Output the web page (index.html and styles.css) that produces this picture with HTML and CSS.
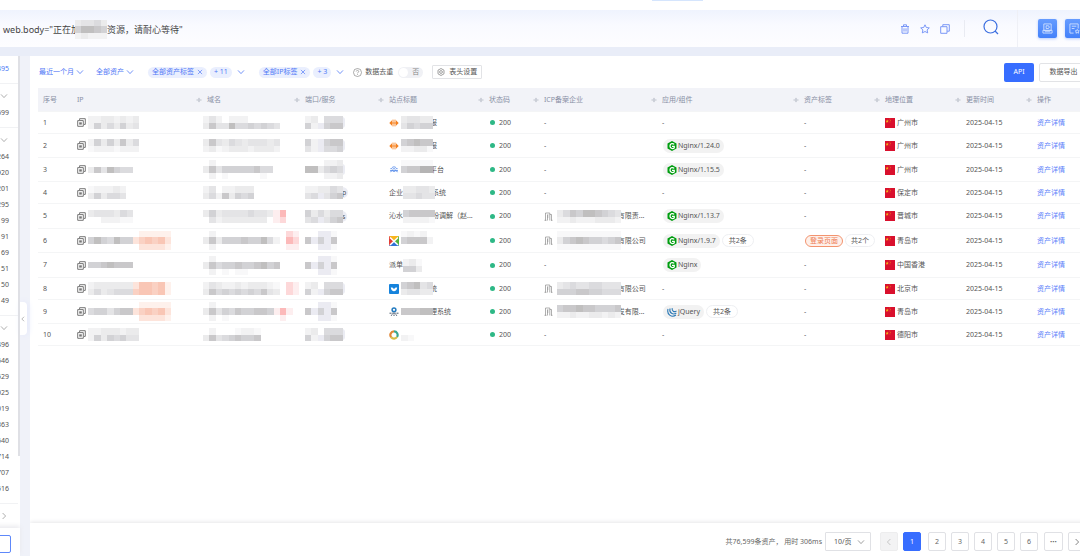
FILE: index.html
```html
<!DOCTYPE html>
<html lang="zh-CN">
<head>
<meta charset="utf-8">
<title>资产列表</title>
<link rel="stylesheet" href="styles.css">
</head>
<body>
<svg class="sprite" aria-hidden="true">
  <symbol id="down" viewBox="0 0 8 8"><path d="M1 2.4 4 5.6 7 2.4" fill="none" stroke="currentColor" stroke-width=".8"/></symbol>
  <symbol id="right" viewBox="0 0 8 8"><path d="M2.6 1 5.6 4 2.6 7" fill="none" stroke="currentColor" stroke-width=".8"/></symbol>
  <symbol id="left" viewBox="0 0 8 8"><path d="M5.4 1 2.4 4 5.4 7" fill="none" stroke="currentColor" stroke-width=".8"/></symbol>
  <symbol id="close" viewBox="0 0 8 8"><path d="M1.2 1.2 6.8 6.8M6.8 1.2 1.2 6.8" fill="none" stroke="currentColor" stroke-width=".9"/></symbol>
  <symbol id="sort" viewBox="0 0 6 8"><path d="M3 1.400 4.300 3.400H1.700zM3 6.600 4.300 4.600H1.700z" fill="#bcc1cb"/><path d="M.4 4h5.200" stroke="#bcc1cb" stroke-width=".9"/></symbol>
  <symbol id="copy-ip" viewBox="0 0 9 9"><path d="M2.600 2.200V.700h5.700v5.700H6.900M.700 2.600h5.600v5.700H.700z" fill="none" stroke="#777" stroke-width="1"/><path d="M2.200 4.300h2.600v2.300H2.200z" fill="#777"/></symbol>
  <symbol id="orange" viewBox="0 0 10 10"><path d="M.3 5 3 2.200v5.600zM9.700 5 7 2.200v5.600z" fill="#f58220"/><path d="M4 1.600v6.800M6 1.600v6.800M2 5h6" stroke="#f58220" stroke-width=".9"/></symbol>
  <symbol id="cloud" viewBox="0 0 10 10"><path d="M1.500 3.500h1.200c.600-2.200 4-2.200 4.600 0h1.200M3.600 4.300c.700-.900 2.100-.900 2.800 0M1.500 7.200c.700-2 2.600-2 3.500-.300.900-1.700 2.800-1.700 3.500.300M1 5.400h8" fill="none" stroke="#4a83e8" stroke-width=".8"/></symbol>
  <symbol id="cross" viewBox="0 0 10 10"><path d="M0 0h10L5 5z" fill="#f8b51d"/><path d="M0 0v10l5-5z" fill="#e23d35"/><path d="M10 0v10L5 5z" fill="#54b23e"/><path d="M0 10h10L5 5z" fill="#3273d6"/><path d="M1 1.500 9 9M9 1.500 1 9" stroke="#fff" stroke-width="1.500"/></symbol>
  <symbol id="smile" viewBox="0 0 10 10"><rect width="10" height="10" rx="1" fill="#1683dc"/><path d="M1.800 3.600h1.600L5 5l1.600-1.400h1.600C8 8.500 2 8.500 1.800 3.600z" fill="#fff"/></symbol>
  <symbol id="people" viewBox="0 0 10 10"><circle cx="5" cy="2.800" r="1.900" fill="none" stroke="#247bc0" stroke-width="1.500"/><path d="M.5 6.200h2M7.500 6.200h2M3.200 6.200h3.600M2.200 8.800l1-1.500M7.800 8.800l-1-1.500M5 7.500V9" stroke="#35475c" stroke-width=".9"/></symbol>
  <symbol id="ring" viewBox="0 0 10 10"><g fill="none" stroke-width="2.200"><path d="M5 1.400A3.600 3.600 0 0 0 2.200 7.300" stroke="#e28735"/><path d="M5 1.400A3.600 3.600 0 0 1 8 7" stroke="#3aa68f"/><path d="M2.200 7.300A3.600 3.600 0 0 0 8 7" stroke="#d7bd45"/></g></symbol>
  <symbol id="company" viewBox="0 0 9 9"><path d="M1.500 8.500V1h4.300v7.500M5.800 2.500h1.700v6M.5 8.300h2M3.500 8.500V2.800M7 8.300h1.500M3 3h1.500M3 5h1.500" fill="none" stroke="#8c8c8c" stroke-width=".7"/></symbol>
  <symbol id="nginx" viewBox="0 0 10 10"><path d="M5 0 9.500 2.500v5L5 10 .5 7.500v-5z" fill="#009d10"/><path d="M7.200 3.400C6.200 2.300 3 2 3 5s3.300 3 4.200 1.800V5.300H5" fill="none" stroke="#fff" stroke-width="1.300"/></symbol>
  <symbol id="jquery" viewBox="0 0 10 10"><g fill="none" stroke="#2c79b5" stroke-width="1.100"><path d="M1 2C-.5 8 5 11 9 8"/><path d="M3 1.500C2 6 6 8.300 9.300 6"/><path d="M5.200 1.200C4.700 4 7 5.500 9.500 4"/></g></symbol>
  <symbol id="flag" viewBox="0 0 10 10"><path d="M0 0h10v10H0z" fill="#d9102d"/><path d="m2.200 1.500.5 1.200 1.200.1-1 .8.3 1.200-1-.7-1.100.7.3-1.200-.9-.8 1.200-.1z" fill="#f6b21a"/><path d="M4.500 1h.8M5 2.600h.7M4.600 4h.7" stroke="#f6b21a" stroke-width=".6"/></symbol>
</svg>

<div class="nav-strip"><span class="nav-active"></span></div>
<header class="search-bar">
  <div class="query">web.body="正在加<span class="mosaic" data-cells="34453/68876/23222"></span>资源，请耐心等待"</div>
  <div class="query-tools">
    <button class="icon-btn" aria-label="清空"><svg viewBox="0 0 10 10"><path d="M1 2.500h8M3.500 2.300V.8h3v1.500M2 2.700v6.500h6V2.700M4 4.300v3.300M6 4.300v3.300"/></svg></button>
    <button class="icon-btn" aria-label="收藏"><svg viewBox="0 0 10 10"><path d="m5 .8 1.300 2.700 3 .4-2.200 2 .6 3L5 7.500 2.300 8.900l.6-3L.7 3.900l3-.4z"/></svg></button>
    <button class="icon-btn" aria-label="复制"><svg viewBox="0 0 10 10"><path d="M2.800 2.500V.7h6.500v6.500H7.200M.7 2.700h6.300v6.600H.7z"/></svg></button>
  </div>
  <button class="search-btn" aria-label="搜索"><svg viewBox="0 0 16 16"><circle cx="7.500" cy="7.500" r="6.500"/><path d="m12 12 3 3"/></svg></button>
  <div class="side-tools">
    <button class="tile" aria-label="语法"><svg viewBox="0 0 12 12"><path d="M2 1h8v7H2zM1 8h10v3H1zM4.500 3h2c2 0 2 3 0 3h-2zM3 9.500h6"/></svg></button>
    <button class="tile" aria-label="收藏夹"><svg viewBox="0 0 12 12"><path d="M5 11H1V1h9v5M3 3.500h5M3 6h3M9 7l.7 1.400 1.500.2-1.100 1 .3 1.500L9 10.400l-1.400.7.3-1.500-1.100-1 1.500-.2z"/></svg></button>
  </div>
</header>

<div class="layout">
  <aside class="sidebar">
    <div class="facets" id="facets"></div>
    <div class="facet-footer"><button class="facet-more" aria-label="更多"></button></div>
    <button class="collapse" aria-label="收起"><svg><use href="#left"/></svg></button>
  </aside>

  <main class="panel">
    <div class="toolbar">
      <button class="link-drop period">最近一个月<svg><use href="#down"/></svg></button>
      <button class="link-drop">全部资产<svg><use href="#down"/></svg></button>
      <div class="tag-group">
        <span class="tag">全部资产标签<svg><use href="#close"/></svg></span><span class="tag">+ 11</span>
        <button class="link-drop" aria-label="资产标签"><svg><use href="#down"/></svg></button>
      </div>
      <div class="tag-group">
        <span class="tag">全部IP标签<svg><use href="#close"/></svg></span><span class="tag">+ 3</span>
        <button class="link-drop" aria-label="IP标签"><svg><use href="#down"/></svg></button>
      </div>
      <label class="dedupe"><svg class="help" viewBox="0 0 9 9"><circle cx="4.500" cy="4.500" r="4"/><path d="M3.200 3.500c.1-1.600 2.600-1.400 2.500 0 0 .9-1.200.9-1.200 1.900M4.500 6.200v.8"/></svg>数据去重<span class="switch"><input type="checkbox"><span>否</span></span></label>
      <button class="outline-btn"><svg viewBox="0 0 8 8"><path d="m4 .5 3 1.700v3.600L4 7.500 1 5.800V2.200z"/><circle cx="4" cy="4" r="1.400"/></svg>表头设置</button>
      <span class="actions"><button class="api-btn">API</button><button class="export-btn">数据导出</button></span>
    </div>
    <div class="table-area">
      <table>
        <colgroup><col class="c-no"><col class="c-ip"><col class="c-domain"><col class="c-port"><col class="c-title"><col class="c-code"><col class="c-icp"><col class="c-app"><col class="c-tag"><col class="c-geo"><col class="c-date"><col class="c-act"></colgroup>
        <thead><tr id="head"></tr></thead>
        <tbody id="rows"></tbody>
      </table>
    </div>
    <footer class="pager">
      <span class="total">共76,599条资产， 用时 306ms</span>
      <span class="size"><select aria-label="每页条数"><option>10/页</option></select><svg><use href="#down"/></svg></span>
      <button class="prev" disabled aria-label="上一页"><svg><use href="#left"/></svg></button>
      <nav class="pages"><button class="current">1</button><button>2</button><button>3</button><button>4</button><button>5</button><button>6</button><button class="more">•••</button><button aria-label="下一页"><svg><use href="#right"/></svg></button></nav>
    </footer>
  </main>
</div>
<script src="app.js"></script>
</body>
</html>
```
FILE: styles.css
```css
* { box-sizing: border-box; }
body {
  margin: 0; height: 100vh; display: flex; flex-direction: column; overflow: hidden;
  background: #eef1f9; color: #555;
  font: 7px/10px "Noto Sans", "Noto Sans CJK SC", sans-serif;
}
button, select { font: inherit; color: inherit; margin: 0; padding: 0; border: 0; background: none; white-space: nowrap; }
svg { display: block; flex: none; width: 8px; height: 8px; }
.sprite { position: absolute; width: 0; height: 0; }

.nav-strip { flex: none; height: 10px; background: #fff; }
.nav-active { display: block; width: 51px; height: 1px; margin-left: 652px; background: #d5e5fd; }
.search-bar { flex: none; display: flex; height: 37px; background: linear-gradient(#eff3fe, #f9faff 40%, #fdfdff); overflow: hidden; }
.query { flex: 1; display: flex; align-items: center; padding: 2px 0 0 3px; font-size: 9px; line-height: 14px; color: #444; }
.query .mosaic { margin-left: -5px; }
.query-tools { display: flex; align-items: center; gap: 10px; margin: 10px 0; padding-right: 14px; border-right: 1px solid #e9ebf2; }
.icon-btn svg { width: 10px; height: 10px; fill: none; stroke: #6d8df6; stroke-width: .9; }
.search-btn { padding: 0 18px; }
.search-btn svg { width: 16px; height: 16px; margin-bottom: 3px; fill: none; stroke: #3c6fe0; stroke-width: 1.2; }
.side-tools { display: flex; align-items: center; gap: 8px; padding-left: 20px; margin-right: -4px; border-left: 1px solid #eff0f6; }
.tile { display: grid; place-items: center; width: 19px; height: 19px; border-radius: 2px; background: linear-gradient(#669cff, #4481fa); box-shadow: 0 1px 3px #b9cdfb; }
.tile svg { width: 11px; height: 11px; fill: none; stroke: #d8e6ff; stroke-width: .9; }

.layout { flex: 1; min-height: 0; display: flex; gap: 10px; background: linear-gradient(#e9edf8 9px, #f0f2f9 9px); padding-top: 9px; }
.sidebar { position: relative; width: 50px; margin-left: -30px; display: flex; flex-direction: column; background: #fff; }
.sidebar::after { content: ""; position: absolute; right: 0; top: 0; width: 2px; height: 80%; background: #dfe0e5; }
.facets { flex: 1; min-height: 0; overflow: hidden; padding-right: 2px; }
.facets section { padding: 5px 9px 6px 0; border-bottom: 1px solid #f1f2f4; text-align: right; }
.facets section:first-child { padding-bottom: 6px; }
.facets p { margin: 0; line-height: 16px; }
.facets svg { margin: 3px 1px 5px auto; color: #999; }
.facets .lead { color: #4d78f5; }
.facets section:last-child { padding-bottom: 0; border-bottom: 0; }
.facet-footer { position: relative; flex: none; padding: 7px 9px 3px; background: #fff; box-shadow: 0 -2px 5px #e9e9ed; }
.facet-more { display: block; width: 100%; height: 18px; border: 1px solid #5e88fa; border-radius: 2px; }
.collapse { position: absolute; left: 50px; top: 246px; width: 7px; height: 33px; border-radius: 0 4px 4px 0; background: #fff; box-shadow: 1px 0 6px #e3e8fb; color: #888; }
.collapse svg { width: 6px; height: 6px; }

.panel { flex: 1; min-width: 0; display: flex; flex-direction: column; background: #fff; overflow: hidden; }
.toolbar { flex: none; display: flex; align-items: center; height: 32px; padding-left: 9px; }
.link-drop { display: flex; align-items: center; gap: 2px; color: #5078f6; }
.period { margin-right: 12px; }
.tag-group { display: flex; align-items: center; gap: 3px; margin-left: 14px; }
.tag { display: flex; align-items: center; gap: 3px; height: 11px; padding: 0 4px; border-radius: 6px; background: #eaeffe; color: #5078f6; white-space: nowrap; }
.tag svg { width: 6px; height: 6px; }
.tag-group .link-drop { margin-left: 2px; }
.dedupe { display: flex; align-items: center; gap: 3px; margin-left: 9px; white-space: nowrap; }
.help { width: 9px; height: 9px; fill: none; stroke: #888; stroke-width: .7; }
.switch { display: flex; align-items: center; justify-content: space-between; width: 25px; height: 11px; margin-left: 2px; padding: 0 4px 0 1px; border-radius: 6px; background: #f0f1f5; color: #888; }
.switch input { appearance: none; width: 9px; height: 9px; margin: 0; border-radius: 50%; background: #fff; }
.outline-btn { display: flex; align-items: center; gap: 4px; height: 14px; margin-left: 9px; padding: 0 4px; border: 1px solid #e2e3e6; border-radius: 1px; }
.outline-btn svg { fill: none; stroke: #777; stroke-width: .7; }
.actions { display: flex; gap: 5px; margin-left: auto; margin-right: -8px; }
.api-btn { width: 30px; height: 19px; border-radius: 2px; background: #376dff; color: #fff; }
.export-btn { width: 49px; height: 19px; border: 1px solid #e2e3e6; border-radius: 2px; }

.table-area { flex: 1; min-height: 0; padding-left: 8px; }
table { width: 100%; table-layout: fixed; border-collapse: separate; border-spacing: 0; }
.c-no { width: 34px; } .c-ip { width: 130px; } .c-domain { width: 98px; } .c-port { width: 84px; }
.c-title { width: 100px; } .c-code { width: 55px; } .c-icp { width: 118px; } .c-app { width: 142px; }
.c-tag { width: 81px; } .c-geo { width: 81px; } .c-date { width: 71px; } .c-act { width: 48px; }
th, td { padding: 0 0 0 5px; text-align: left; font-weight: 400; border-bottom: 1px solid #f4f5f6; white-space: nowrap; }
th { height: 24px; padding-top: 1px; background: #f2f3f8; color: #8990a5; }
th > div { display: flex; align-items: center; justify-content: space-between; }
th svg { width: 6px; height: 8px; }
td:nth-child(3) { padding-left: 1px; }
.compact td { height: 22px; }
.roomy td { height: 24px; }
.spacious td { height: 25px; }
.cell { display: flex; align-items: center; height: 19px; }
.cell > svg { width: 10px; height: 10px; margin-right: 2px; }
.cell > .ip-icon, .cell > .company { width: 9px; height: 9px; }
.mosaic { position: relative; flex: none; }
.tuck { margin-left: -3px; }
.port-end { height: 11px; min-width: 3px; padding-right: 2px; margin-left: -1px; border-radius: 0 6px 6px 0; background: #ebecf3; line-height: 11px; }
.dot { width: 5px; height: 5px; margin: 0 4px 0 1px; border-radius: 50%; background: #2eb886; }
.chip { display: flex; align-items: center; gap: 1px; height: 14px; margin-left: 1px; padding: 0 4px; border-radius: 7px; background: #f2f2f2; }
.chip svg { width: 10px; height: 10px; }
.count { height: 13px; margin-left: 2px; padding: 0 6px; border: 1px solid #eeeff2; border-radius: 7px; line-height: 11px; }
.login { height: 12px; padding: 0 4px; margin-left: 1px; border: 1px solid #f3946f; border-radius: 6px; background: #fef0ea; color: #ee7d54; line-height: 10px; }
.login + .count { padding: 0 5px; }
td a { color: #5b80fa; text-decoration: none; }

.pager { flex: none; display: flex; align-items: center; justify-content: flex-end; height: 33px; padding-top: 4px; margin-right: -6px; box-shadow: 0 -1px 4px #e6e6e8; color: #666; }
.total { margin-right: 3px; white-space: nowrap; }
.size { display: flex; align-items: center; width: 46px; height: 19px; padding-right: 5px; margin-right: 9px; border: 1px solid #e0e1e5; border-radius: 1px; color: #888; }
.size select { flex: 1; appearance: none; padding-left: 8px; color: #555; outline: 0; }
.pager button { display: grid; place-items: center; width: 18px; height: 19px; border: 1px solid #e0e1e5; border-radius: 2px; }
.pager .prev { margin-right: 5px; background: #f3f3f4; border-color: #ededee; color: #bbb; }
.pages { display: flex; gap: 5px; }
.pager .current { margin-right: 2px; border-color: #376dff; background: #376dff; color: #fff; }
.pager .more { width: 19px; margin-left: 1px; font-size: 6px; }
```
FILE: app.js
```js
const palette = {
  1: '#f8f8f9', 2: '#f2f2f3', 3: '#ebebec', 4: '#e4e4e6', 5: '#dbdbde', 6: '#d2d2d5', 7: '#c9c8ca', 8: '#c0bfbf', 9: '#b5b4b4',
  l: '#ebebf2', a: '#fef1ec', b: '#fde4db', c: '#fad1c3', d: '#f9c6b5', p: '#fdeeef', q: '#fdd8d9', r: '#fcb9b9'
};
const cellSize = 6.4;

// Redacted values are drawn as a grid of flat tiles, rows separated by "/".
function mosaicSvg(spec) {
  const lines = spec.split('/');
  const cols = Math.max(...lines.map(l => l.length));
  const tiles = lines.map((line, y) => [...line].map((k, x) =>
    palette[k] ? `<path d="M${x} ${y}h1v1h-1z" fill="${palette[k]}"/>` : '').join('')).join('');
  return `<svg style="width:${Math.round(cols * cellSize)}px;height:${Math.round(lines.length * cellSize)}px" viewBox="0 0 ${cols} ${lines.length}" preserveAspectRatio="none" shape-rendering="crispEdges">${tiles}</svg>`;
}
const m = spec => `<span class="mosaic">${mosaicSvg(spec)}</span>`;
const icon = (name, cls = '') => `<svg class="${cls}"><use href="#${name}"/></svg>`;
const tuck = text => `<span class="tuck">${text}</span>`;
const nginx = v => `<span class="chip">${icon('nginx')}Nginx${v}</span>`;
const company = (spec, tail) => icon('company', 'company') + '&nbsp;' + m(spec) + tuck(tail);

document.querySelectorAll('[data-cells]').forEach(e => { e.innerHTML = mosaicSvg(e.dataset.cells); });

const heads = ['序号', 'IP', '域名', '端口/服务', '站点标题', '状态码', 'ICP备案企业', '应用/组件', '资产标签', '地理位置', '更新时间', '操作'];
document.getElementById('head').innerHTML = heads.map((h, i) =>
  `<th><div>${h}${i > 0 && i < 11 ? icon('sort') : ''}</div></th>`).join('');

const rows = [
  ['compact', '22332323/26353634', '242.222...../374485565654', '23.555/62l677', '', icon('orange') + m('34433/46566') + tuck('报'), '-', '-', '-', '广州市'],
  ['roomy', '26363735/12221222', '374354344434/231233323332', '62l677/42l556', '', icon('orange') + m('67877/22331') + tuck('报'), '-', nginx('/1.24.0'), '-', '广州市'],
  ['roomy', '3748655', '.2........./37466666755/.2.1.....1.', '...223/883565/...223', '', icon('cloud') + m('11111/67799/.....') + tuck('平台'), '-', nginx('/1.15.5'), '-', '广州市'],
  ['compact', '122232/363554', '24.22333/35273656', '223354/45l467', 'p', '企业' + m('33443/44544') + tuck('系统'), '-', '-', '-', '保定市'],
  ['spacious', '3444354/..22211', '36344445443pr/.423333333.pq', '635355/45l467', 's', '沁水' + m('67777/22221') + tuck('纷调解（赵...'), company('3576887654/2232223332', '有限责...'), nginx('/1.13.7'), '-', '晋城市'],
  ['roomy', '........aaaaa/6865866bcdcdb/........bbbba', '.2...........qp/373666766852.rq/.2...........pp', '..ll1/7l6l7/..ll1', null, icon('cross') + m('1212./67772/.....'), company('1111111111/3678766567/1111111111', '有限公司'), nginx('/1.9.7') + '<span class="count">共2条</span>', '<span class="login">登录页面</span><span class="count">共2个</span>', '青岛市'],
  ['spacious', '6678777', '.2........../375667667867/.2.1.11.....', '..ll1/7l6l7/..ll1', null, '派单' + m('231/663'), '-', nginx(''), '-', '中国香港'],
  ['compact', '2333333bddcda/3534555cddcda', '243223233321.qp/375656565743.qp', '23.555/62l677', '', icon('smile') + m('67845/34433') + tuck('统'), company('3454455444/6667766555', '有限公司'), '-', '-', '北京市'],
  ['roomy', '........aaaaa/5664677bcdcdb/........bbbba', '.2.............../37465766776prp/.2.1........p', '..ll1/7l6l7/..ll1', null, icon('people') + m('...../77788/.....') + tuck('理系统'), company('6778776667/2232233232', '发有限...'), `<span class="chip">${icon('jquery')}jQuery</span><span class="count">共2条</span>`, '-', '青岛市'],
  ['compact', '22333233/26365644', '.2...1221./374567667', '23.555/62l677', '', icon('ring') + m('../21'), '-', '-', '-', '德阳市']
];
document.getElementById('rows').innerHTML = rows.map((r, i) => {
  const [size, ip, domain, port, tail, title, icp, app, tag, geo] = r;
  const cells = [i + 1, icon('copy-ip', 'ip-icon') + m(ip), m(domain), m(port) + (tail === null ? '' : `<span class="port-end">${tail}</span>`), title,
    '<span class="dot"></span>200', icp, app, tag, icon('flag') + geo, '2025-04-15', '<a href="#">资产详情</a>'];
  return `<tr class="${size}">${cells.map(c => `<td><div class="cell">${c}</div></td>`).join('')}</tr>`;
}).join('');

const facets = [
  ['lead', ['495']], ['down', ['699']],
  ['down', ['264', '920', '201', '295', '199', '191', '69', '51', '50', '49']],
  ['down', ['496', '546', '529', '025', '019', '363', '540', '714', '707', '516']],
  ['right', []]
];
document.getElementById('facets').innerHTML = facets.map(([kind, values]) =>
  `<section>${kind === 'lead' ? '' : icon(kind)}${values.map(v => `<p class="${kind === 'lead' ? 'lead' : ''}">${v}</p>`).join('')}</section>`).join('');
```
